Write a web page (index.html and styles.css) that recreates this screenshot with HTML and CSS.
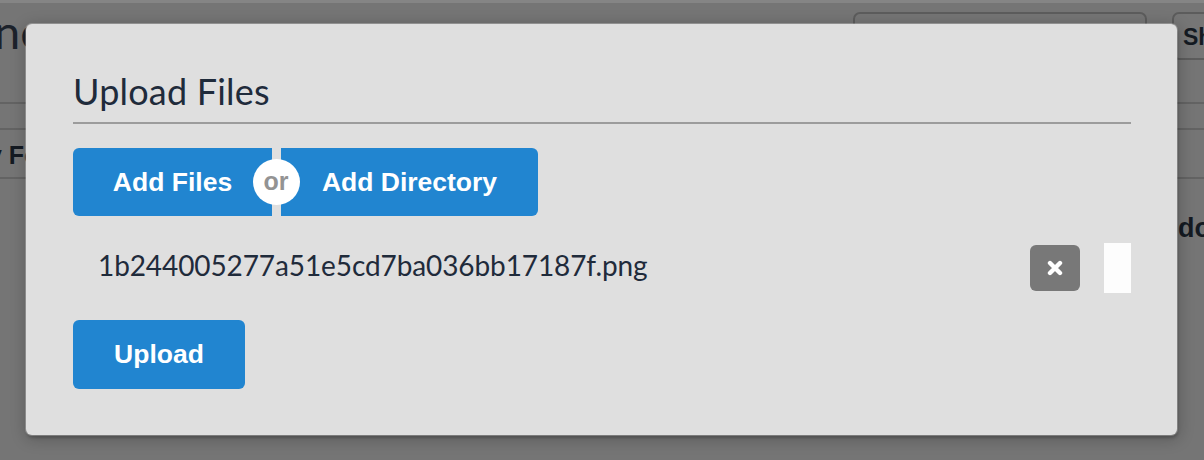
FILE: index.html
```html
<!DOCTYPE html>
<html lang="en">
<head>
<meta charset="utf-8">
<title>Upload Files</title>
<link rel="stylesheet" href="styles.css">
</head>
<body>
<div class="page">
  <div class="topbar">
    <div class="page-title">nc</div>
    <div class="search"></div>
    <div class="share-btn">Share</div>
  </div>
  <div class="toolbar">
    <div class="folder-btn">y Folder</div>
  </div>
  <div class="content">
    <div class="side-label">download</div>
  </div>

  <div class="modal">
    <div class="modal-header">Upload Files</div>
    <div class="modal-body">
      <div class="btn-group">
        <button class="btn btn-blue btn-add-files">Add Files</button>
        <div class="or"><span>or</span></div>
        <button class="btn btn-blue btn-add-dir">Add Directory</button>
      </div>
      <div class="file-row">
        <div class="file-name">1b244005277a51e5cd7ba036bb17187f.png</div>
        <button class="btn-remove" aria-label="Remove">
          <svg width="18" height="16" viewBox="0 0 18 16"><path d="M4 3 L14 13 M14 3 L4 13" stroke="#fff" stroke-width="4.4" stroke-linecap="round" fill="none"/></svg>
        </button>
        <div class="progress"></div>
      </div>
      <div class="actions">
        <button class="btn btn-blue btn-upload">Upload</button>
      </div>
    </div>
  </div>
</div>
</body>
</html>
```

FILE: styles.css
```css
* { box-sizing: border-box; }
html, body { margin: 0; padding: 0; }
body { width: 1204px; height: 460px; overflow: hidden; background: #757575; }

.page {
  position: relative;
  width: 1204px;
  height: 460px;
  background: #757575;
  border-top: 3px solid #858585;
  overflow: hidden;
  font-family: "Lato", "Liberation Sans", sans-serif;
  color: #141a22;
}

.topbar {
  display: flex;
  align-items: flex-start;
  height: 101px;
  border-bottom: 2px solid #636363;
}
.page-title {
  font-size: 47px;
  font-weight: 400;
  line-height: 50px;
  margin-top: 3px;
  margin-left: -6px;
  color: #1c222b;
}
.search {
  margin-left: auto;
  margin-top: 9px;
  width: 294px;
  height: 70px;
  border: 2px solid #5c5c5c;
  border-radius: 7px;
  flex-shrink: 0;
}
.share-btn {
  flex-shrink: 0;
  margin-left: 25px;
  margin-right: -88px;
  margin-top: 9px;
  width: 120px;
  height: 48px;
  border: 2px solid #5c5c5c;
  border-radius: 7px 0 0 7px;
  padding: 10px 0 0 9px;
  font-family: "Liberation Sans", sans-serif;
  font-weight: 700;
  font-size: 23px;
  line-height: 26px;
  background: #767676;
}

.toolbar {
  display: flex;
  margin-top: 24px;
  height: 51px;
  border-top: 2px solid #636363;
  border-bottom: 2px solid #636363;
}
.folder-btn {
  margin-left: -12px;
  padding-top: 12px;
  font-family: "Liberation Sans", sans-serif;
  font-weight: 700;
  font-size: 25px;
  line-height: 26px;
}
.content {
  display: flex;
  justify-content: flex-end;
  padding-top: 34px;
}
.side-label {
  margin-right: -100px;
  font-family: "Liberation Sans", sans-serif;
  font-weight: 700;
  font-size: 27px;
}

/* Modal */
.modal {
  position: absolute;
  left: 26px;
  top: 21px;
  width: 1151px;
  height: 411px;
  background: #dfdfdf;
  border-radius: 6px;
  box-shadow: 0 0 0 1px rgba(255,255,255,0.25), 1px 3px 3px 0 rgba(0,0,0,0.2), 1px 3px 15px 2px rgba(0,0,0,0.2);
  padding: 47px 46px 47px 47px;
}
.modal-header {
  font-family: "Lato", "Liberation Sans", sans-serif;
  font-weight: 400;
  font-size: 36px;
  letter-spacing: 0.2px;
  line-height: 40px;
  color: #1f2b3b;
  padding-bottom: 11px;
  border-bottom: 2px solid #9c9c9c;
}
.modal-body {
  display: flex;
  flex-direction: column;
  align-items: flex-start;
}

.btn {
  border: none;
  margin: 0;
  cursor: pointer;
  font-family: "Liberation Sans", "Helvetica", sans-serif;
  font-weight: 700;
  color: #fff;
  border-radius: 6px;
  padding: 0;
  text-align: center;
}
.btn-blue { background: #2185d0; }

.btn-group {
  display: flex;
  margin-top: 24px;
  height: 68px;
}
.btn-group .btn {
  font-size: 26.5px;
  height: 68px;
}
.btn-add-files {
  width: 199px;
  border-radius: 6px 0 0 6px;
}
.btn-add-dir {
  width: 257px;
  border-radius: 0 6px 6px 0;
}
.or {
  position: relative;
  width: 9px;
  z-index: 2;
}
.or span {
  position: absolute;
  left: 50%;
  top: 50%;
  width: 47px;
  height: 46px;
  margin-left: -24px;
  margin-top: -23px;
  border-radius: 50%;
  background: #fff;
  color: #939393;
  font-family: "Liberation Sans", sans-serif;
  font-weight: 700;
  font-size: 25px;
  line-height: 45px;
  text-align: center;
}

.file-row {
  display: flex;
  align-items: center;
  width: 100%;
  height: 50px;
  margin-top: 27px;
}
.file-name {
  flex: 1;
  padding-left: 25px;
  font-family: "Lato", "Liberation Sans", sans-serif;
  font-size: 28px;
  letter-spacing: -0.1px;
  color: #1f2b3b;
  padding-bottom: 7px;
}
.btn-remove {
  width: 50px;
  height: 46px;
  border: none;
  border-radius: 6px;
  background: #787878;
  display: flex;
  align-items: center;
  justify-content: center;
  padding: 0;
  margin-right: 24px;
}
.btn-remove svg { display: block; }
.progress {
  width: 27px;
  height: 50px;
  background: #fdfdfd;
}

.actions {
  margin-top: 27px;
}
.btn-upload {
  width: 172px;
  height: 69px;
  font-size: 26.5px;
}
```
